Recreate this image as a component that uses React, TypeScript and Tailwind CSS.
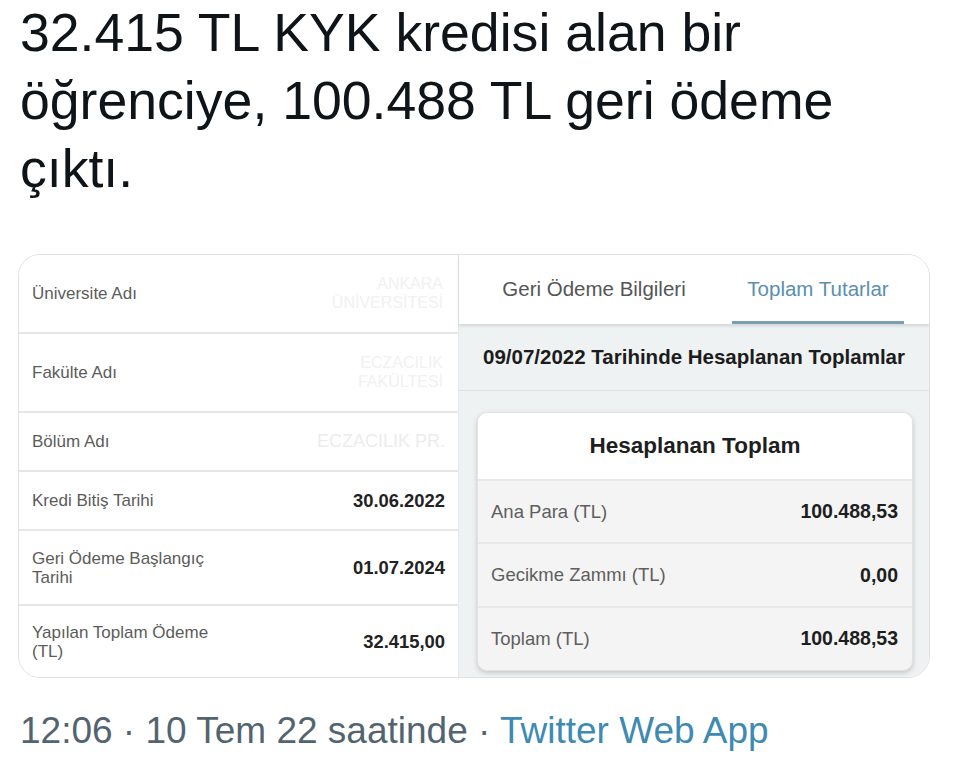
import React from "react";

const leftRows: { label: string; value?: string; faded?: string[]; fadedBig?: string; h: string }[] = [
  { label: "Üniversite Adı", faded: ["ANKARA", "ÜNİVERSİTESİ"], h: "h-[79px]" },
  { label: "Fakülte Adı", faded: ["ECZACILIK", "FAKÜLTESİ"], h: "h-[80px]" },
  { label: "Bölüm Adı", fadedBig: "ECZACILIK PR.", h: "h-[59px]" },
  { label: "Kredi Bitiş Tarihi", value: "30.06.2022", h: "h-[59px]" },
  { label: "Geri Ödeme Başlangıç Tarihi", value: "01.07.2024", h: "h-[76px]" },
  { label: "Yapılan Toplam Ödeme (TL)", value: "32.415,00", h: "h-[71px]" },
];

const rightRows = [
  { label: "Ana Para (TL)", value: "100.488,53" },
  { label: "Gecikme Zammı (TL)", value: "0,00" },
  { label: "Toplam (TL)", value: "100.488,53" },
];

export default function App() {
  return (
    <div className="w-[960px] h-[773px] bg-white overflow-hidden font-['Liberation_Sans',Arial,sans-serif]">
      <div className="pl-[20px] -mt-[2px] text-[53.6px] leading-[68px] text-[#0f1419]">
        32.415 TL KYK kredisi alan bir
        <br />
        öğrenciye, 100.488 TL geri ödeme
        <br />
        çıktı.
      </div>

      <div className="ml-[18px] mt-[52px] w-[912px] h-[424px] border border-[#e1e1e1] rounded-[22px] overflow-hidden flex">
        {/* Left table */}
        <div className="w-[439px] flex flex-col bg-white">
          {leftRows.map((r, i) => (
            <div
              key={i}
              className={`${r.h} flex items-center justify-between pl-[13px] pr-[13px] ${
                i < leftRows.length - 1 ? "border-b-2 border-[#e6e6e6]" : ""
              }`}
            >
              <div className="w-[195px] text-[17px] leading-[19px] text-[#5c5c5c]">{r.label}</div>
              {r.value && <div className="text-[18.4px] font-bold text-[#222222]">{r.value}</div>}
              {r.faded && (
                <div className="text-right text-[16px] leading-[19px] text-[#f1f1f1] pr-[2px]">
                  {r.faded.map((f) => (
                    <div key={f}>{f}</div>
                  ))}
                </div>
              )}
              {r.fadedBig && <div className="text-[18px] text-[#ececec]">{r.fadedBig}</div>}
            </div>
          ))}
        </div>

        {/* Right panel */}
        <div className="flex-1 flex flex-col bg-[#eef2f2] border-l border-[#e4e8e8]">
          <div className="h-[69px] bg-white flex items-stretch pl-[25px] gap-[28px] shadow-[0_2px_3px_rgba(0,0,0,0.12)] relative z-10">
            <div className="w-[220px] flex items-center justify-center text-[20.5px] text-[#555555]">
              Geri Ödeme Bilgileri
            </div>
            <div className="w-[172px] flex items-center justify-center text-[20.5px] text-[#5a8fae] relative">
              Toplam Tutarlar
              <div className="absolute left-0 right-0 bottom-0 h-[3px] bg-[#7a9fb6]" />
            </div>
          </div>
          <div className="h-[67px] flex items-center justify-center border-b border-[#dde3e3] text-[20.5px] font-bold text-[#1c1c1c]">
            09/07/2022 Tarihinde Hesaplanan Toplamlar
          </div>
          <div className="mt-[21px] ml-[18px] mr-[16px] h-[259px] rounded-[10px] bg-[#f4f4f4] border border-[#e2e2e2] shadow-[0_2px_5px_rgba(0,0,0,0.18)] overflow-hidden flex flex-col">
            <div className="h-[66px] bg-white flex items-center justify-center text-[22.5px] font-bold text-[#1e1e1e]">
              Hesaplanan Toplam
            </div>
            {rightRows.map((r) => (
              <div
                key={r.label}
                className="h-[64px] flex items-center justify-between pl-[13px] pr-[14px] border-t-2 border-[#e8e8e8]"
              >
                <span className="text-[18.5px] text-[#5e5e5e]">{r.label}</span>
                <span className="text-[19.5px] font-bold text-[#1e1e1e]">{r.value}</span>
              </div>
            ))}
          </div>
        </div>
      </div>

      <div className="pl-[20px] mt-[31px] text-[37px] leading-[44px] text-[#536471]">
        12:06 · 10 Tem 22 saatinde · <span className="text-[#3f8ab3]">Twitter Web App</span>
      </div>
    </div>
  );
}
